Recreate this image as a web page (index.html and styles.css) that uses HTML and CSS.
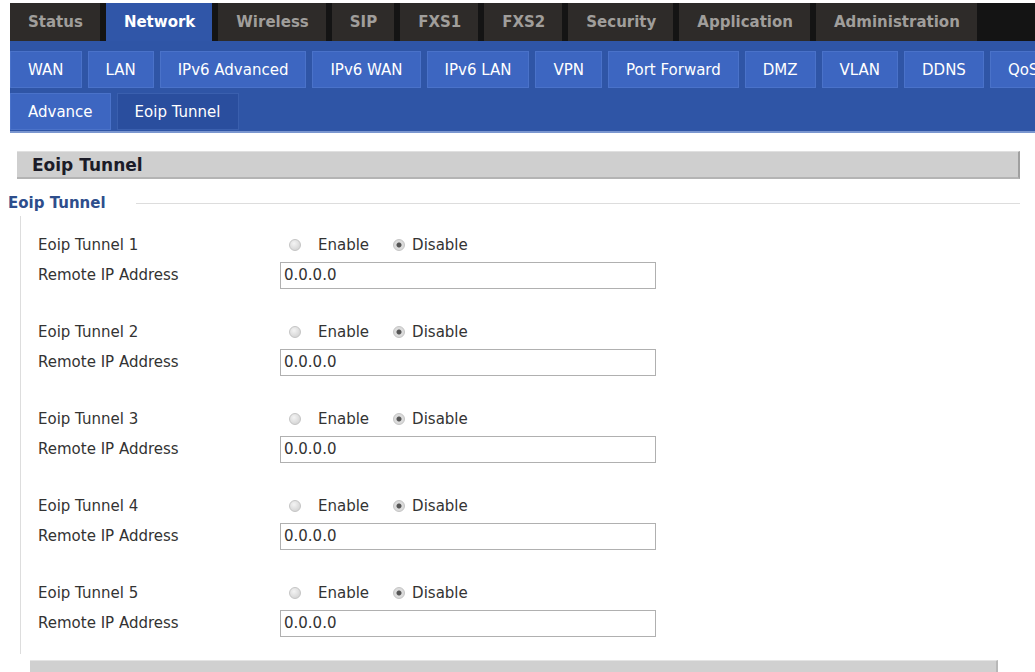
FILE: index.html
```html
<!DOCTYPE html>
<html lang="en">
<head>
    <meta charset="UTF-8">
    <title>Eoip Tunnel</title>
    <link rel="stylesheet" href="styles.css">
</head>
<body>
    <div class="main-nav">
        <a class="main-tab">Status</a>
        <a class="main-tab active">Network</a>
        <a class="main-tab">Wireless</a>
        <a class="main-tab">SIP</a>
        <a class="main-tab">FXS1</a>
        <a class="main-tab">FXS2</a>
        <a class="main-tab">Security</a>
        <a class="main-tab">Application</a>
        <a class="main-tab">Administration</a>
    </div>

    <div class="sub-nav">
        <div class="sub-row">
            <a class="sub-tab">WAN</a>
            <a class="sub-tab">LAN</a>
            <a class="sub-tab">IPv6 Advanced</a>
            <a class="sub-tab">IPv6 WAN</a>
            <a class="sub-tab">IPv6 LAN</a>
            <a class="sub-tab">VPN</a>
            <a class="sub-tab">Port Forward</a>
            <a class="sub-tab">DMZ</a>
            <a class="sub-tab">VLAN</a>
            <a class="sub-tab">DDNS</a>
            <a class="sub-tab">QoS</a>
        </div>
        <div class="sub-row">
            <a class="sub-tab">Advance</a>
            <a class="sub-tab active">Eoip Tunnel</a>
        </div>
    </div>

    <div class="content">
        <div class="section-title">Eoip Tunnel</div>

        <div class="group">
            <div class="legend">
                <span>Eoip Tunnel</span>
                <div class="legend-line"></div>
            </div>
            <div class="group-body">
                <div class="tunnel">
                    <div class="form-row">
                        <label class="field-label">Eoip Tunnel 1</label>
                        <div class="radios">
                            <span class="radio"></span><span class="radio-text">Enable</span>
                            <span class="radio checked"></span><span class="radio-text">Disable</span>
                        </div>
                    </div>
                    <div class="form-row">
                        <label class="field-label">Remote IP Address</label>
                        <input class="text-input" type="text" value="0.0.0.0">
                    </div>
                </div>
                <div class="tunnel">
                    <div class="form-row">
                        <label class="field-label">Eoip Tunnel 2</label>
                        <div class="radios">
                            <span class="radio"></span><span class="radio-text">Enable</span>
                            <span class="radio checked"></span><span class="radio-text">Disable</span>
                        </div>
                    </div>
                    <div class="form-row">
                        <label class="field-label">Remote IP Address</label>
                        <input class="text-input" type="text" value="0.0.0.0">
                    </div>
                </div>
                <div class="tunnel">
                    <div class="form-row">
                        <label class="field-label">Eoip Tunnel 3</label>
                        <div class="radios">
                            <span class="radio"></span><span class="radio-text">Enable</span>
                            <span class="radio checked"></span><span class="radio-text">Disable</span>
                        </div>
                    </div>
                    <div class="form-row">
                        <label class="field-label">Remote IP Address</label>
                        <input class="text-input" type="text" value="0.0.0.0">
                    </div>
                </div>
                <div class="tunnel">
                    <div class="form-row">
                        <label class="field-label">Eoip Tunnel 4</label>
                        <div class="radios">
                            <span class="radio"></span><span class="radio-text">Enable</span>
                            <span class="radio checked"></span><span class="radio-text">Disable</span>
                        </div>
                    </div>
                    <div class="form-row">
                        <label class="field-label">Remote IP Address</label>
                        <input class="text-input" type="text" value="0.0.0.0">
                    </div>
                </div>
                <div class="tunnel">
                    <div class="form-row">
                        <label class="field-label">Eoip Tunnel 5</label>
                        <div class="radios">
                            <span class="radio"></span><span class="radio-text">Enable</span>
                            <span class="radio checked"></span><span class="radio-text">Disable</span>
                        </div>
                    </div>
                    <div class="form-row">
                        <label class="field-label">Remote IP Address</label>
                        <input class="text-input" type="text" value="0.0.0.0">
                    </div>
                </div>
            </div>
        </div>

        <div class="button-bar"></div>
    </div>
</body>
</html>
```

FILE: styles.css
```css
/* Basic reset */
* {
    margin: 0;
    padding: 0;
    box-sizing: border-box;
}

body {
    font-family: "DejaVu Sans", Verdana, sans-serif;
    font-size: 15px;
    color: #333;
    background: #fff;
    overflow: hidden;
}

/* Top level tabs */
.main-nav {
    display: flex;
    gap: 6px;
    margin: 3px 0 0 10px;
    height: 38px;
    background: #141414;
    white-space: nowrap;
}

.main-tab {
    display: flex;
    align-items: center;
    padding: 0 17px 0 18px;
    background: #2e2b29;
    color: #a09e9b;
    font-weight: bold;
    font-size: 15px;
}

.main-tab.active {
    background: #3056a8;
    color: #fff;
}

/* Second level tabs */
.sub-nav {
    background: #2f55a6;
    margin-left: 10px;
    padding: 10px 0 1px 0;
    border-bottom: 2px solid #7a96cf;
}

.sub-row {
    display: flex;
    gap: 6px;
    height: 37px;
    margin-bottom: 5px;
    white-space: nowrap;
}

.sub-row:last-child {
    margin-bottom: 0;
}

.sub-tab {
    display: flex;
    align-items: center;
    padding: 0 17px;
    background: #3d66c1;
    border: 1px solid #4a72c9;
    color: #fff;
    font-size: 15px;
}

.sub-tab.active {
    background: #2a4e9e;
    border-color: #3a5fae;
}

/* Page content */
.content {
    padding: 18px 15px 0 17px;
}

.section-title {
    height: 28px;
    line-height: 26px;
    padding-left: 15px;
    background: #cfcfcf;
    border-top: 1px solid #e0e0e0;
    border-bottom: 2px solid #b4b4b4;
    border-right: 2px solid #a0a0a0;
    font-weight: bold;
    font-size: 17px;
    color: #1c1c28;
}

/* Fieldset-like group */
.group {
    margin: 15px 0 0 -9px;
}

.legend {
    display: flex;
    align-items: center;
    gap: 30px;
    font-weight: bold;
    font-size: 15px;
    color: #2e4e8c;
}

.legend-line {
    flex: 1;
    border-top: 1px solid #ddd;
}

.group-body {
    margin: 4px 0 0 12px;
    padding: 14px 0 0 17px;
    border-left: 1px solid #ddd;
    height: 438px;
}

.tunnel {
    margin-bottom: 27px;
}

.form-row {
    display: flex;
    align-items: center;
    height: 30px;
}

.field-label {
    width: 242px;
}

.radios {
    display: flex;
    align-items: center;
    padding-left: 9px;
}

.radio {
    width: 12px;
    height: 12px;
    border-radius: 50%;
    border: 1px solid #c4c4c4;
    background: radial-gradient(circle at 40% 35%, #f4f4f4 0%, #d8d8d8 70%, #cfcfcf 100%);
}

.radio-text {
    margin: 0 24px 0 17px;
}

.radio.checked + .radio-text {
    margin-left: 7px;
}

.radio.checked {
    background: radial-gradient(circle, #555 0, #555 2px, #ddd 3px, #d6d6d6 100%);
}

.text-input {
    width: 376px;
    height: 27px;
    padding: 0 3px;
    border: 1px solid #b0b0b0;
    font-family: inherit;
    font-size: 15px;
    color: #333;
    outline: none;
}

/* Bottom button area */
.button-bar {
    margin: 6px 22px 0 13px;
    height: 30px;
    background: #d0d0d0;
    border-top: 1px solid #e4e4e4;
    border-right: 2px solid #b8b8b8;
}
```
